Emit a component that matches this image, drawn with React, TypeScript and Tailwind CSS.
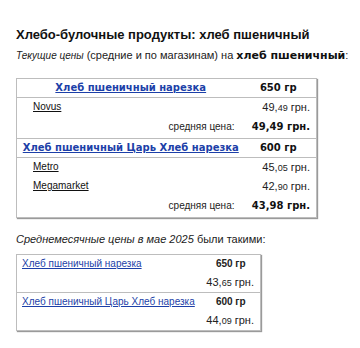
import React from "react";

const arial = { fontFamily: '"Liberation Sans", Arial, sans-serif' };
const verdana = { fontFamily: '"DejaVu Sans", Verdana, sans-serif' };

function Price({ whole, frac }: { whole: string; frac: string }) {
  return (
    <span className="text-[11px] text-[#222]" style={arial}>
      {whole},<span className="text-[9px]">{frac}</span> грн.
    </span>
  );
}

type Group = {
  name: string;
  weight: string;
  shops: { name: string; whole: string; frac: string }[];
  avg: string;
};

const groups: Group[] = [
  {
    name: "Хлеб пшеничный нарезка",
    weight: "650 гр",
    shops: [{ name: "Novus", whole: "49", frac: "49" }],
    avg: "49,49 грн.",
  },
  {
    name: "Хлеб пшеничный Царь Хлеб нарезка",
    weight: "600 гр",
    shops: [
      { name: "Metro", whole: "45", frac: "05" },
      { name: "Megamarket", whole: "42", frac: "90" },
    ],
    avg: "43,98 грн.",
  },
];

const monthly = [
  { name: "Хлеб пшеничный нарезка", weight: "650 гр", whole: "43", frac: "65" },
  { name: "Хлеб пшеничный Царь Хлеб нарезка", weight: "600 гр", whole: "44", frac: "09" },
];

export default function App() {
  return (
    <div className="w-[360px] h-[348px] bg-white text-[#111] px-4 pt-[27px]" style={arial}>
      <h1 className="text-[13px] font-bold leading-[15px] text-[#111]">
        Хлебо-булочные продукты: хлеб пшеничный
      </h1>
      <p className="mt-[6px] text-[11px] leading-[14px] text-[#222] whitespace-nowrap">
        <i className="text-[10px]">Текущие цены</i> (средние и по магазинам) на{" "}
        <b className="text-[11px] text-[#111]" style={verdana}>
          хлеб пшеничный
        </b>
        :
      </p>

      <table className="mt-[15px] w-[300px] table-fixed border-collapse border border-[#bdbdbd] shadow-[1px_1px_1px_#9a9a9a] text-[10px] leading-[12px]">
        <colgroup>
          <col className="w-[228px]" />
          <col className="w-[72px]" />
        </colgroup>
        <tbody>
          {groups.map((g, gi) => (
            <React.Fragment key={gi}>
              <tr className="border-b border-[#bdbdbd] h-[19px]">
                <td className="text-center p-0 whitespace-nowrap">
                  <a
                    href="#"
                    className="text-[10px] font-bold text-[#1c3fa8] underline"
                    style={verdana}
                  >
                    {g.name}
                  </a>
                </td>
                <td className="text-center p-0 pr-[4px]">
                  <span className="text-[10px] font-bold text-[#111]" style={verdana}>
                    {g.weight}
                  </span>
                </td>
              </tr>
              {g.shops.map((s, si) => (
                <tr key={si} className="h-[19px]">
                  <td className="p-0 pl-[16px]">
                    <a href="#" className="text-[10px] text-[#111] underline">
                      {s.name}
                    </a>
                  </td>
                  <td className="p-0 pr-[6px] text-right">
                    <Price whole={s.whole} frac={s.frac} />
                  </td>
                </tr>
              ))}
              <tr className={`h-[22px] ${gi === 0 ? "border-b border-[#bdbdbd]" : ""}`}>
                <td className="p-0 pr-[10px] text-right text-[10px] text-[#222]">средняя цена:</td>
                <td className="p-0 pr-[6px] text-right whitespace-nowrap">
                  <span className="text-[10px] font-bold text-[#111]" style={verdana}>
                    {g.avg}
                  </span>
                </td>
              </tr>
            </React.Fragment>
          ))}
        </tbody>
      </table>

      <p className="mt-[14px] text-[11px] leading-[14px] text-[#222] whitespace-nowrap">
        <i>Среднемесячные цены в мае 2025</i> были такими:
      </p>

      <table className="mt-[8px] w-[244px] table-fixed border-collapse border border-[#bdbdbd] shadow-[1px_1px_1px_#9a9a9a] text-[10px] leading-[12px]">
        <colgroup>
          <col className="w-[185px]" />
          <col className="w-[59px]" />
        </colgroup>
        <tbody>
          {monthly.map((m, i) => (
            <React.Fragment key={i}>
              <tr className="h-[18px]">
                <td className="p-0 pl-[5px] whitespace-nowrap">
                  <a href="#" className="text-[10px] text-[#1c3fa8] underline">
                    {m.name}
                  </a>
                </td>
                <td className="p-0 text-center">
                  <span className="text-[10px] font-bold text-[#222]">{m.weight}</span>
                </td>
              </tr>
              <tr className={`h-[20px] ${i === 0 ? "border-b border-[#bdbdbd]" : ""}`}>
                <td className="p-0" />
                <td className="p-0 pr-[6px] text-right whitespace-nowrap">
                  <span className="text-[11px] text-[#222]">
                    {m.whole},<span className="text-[9px]">{m.frac}</span> грн.
                  </span>
                </td>
              </tr>
            </React.Fragment>
          ))}
        </tbody>
      </table>
    </div>
  );
}
